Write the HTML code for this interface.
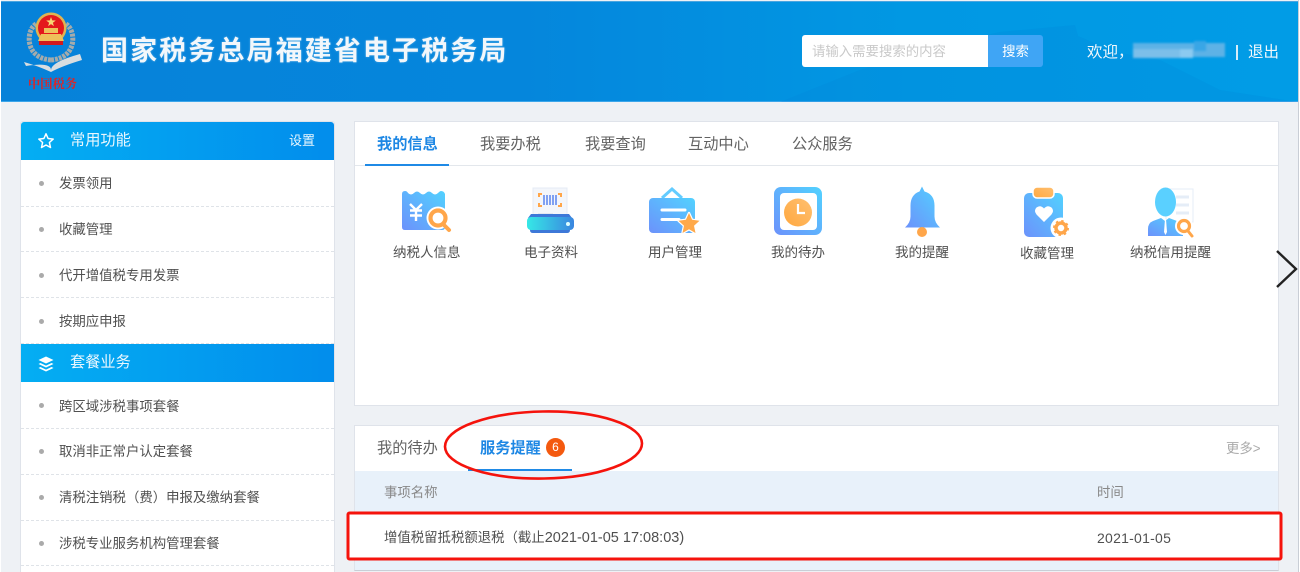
<!DOCTYPE html>
<html lang="zh"><head><meta charset="utf-8"><title>国家税务总局福建省电子税务局</title>
<style>
*{box-sizing:border-box;margin:0;padding:0}
html,body{width:1300px;height:572px;overflow:hidden;background:#eef1f5}
body{position:relative;font-family:"Liberation Sans","Noto Sans CJK SC",sans-serif;color:#555}
.a{position:absolute;white-space:nowrap;line-height:20px}
.box{position:absolute}
.item{font-size:13.4px;left:59px;color:#505050}
.dot{position:absolute;left:39px;width:5px;height:5px;border-radius:50%;background:#aaa}
.dash{position:absolute;left:21px;width:313px;border-top:1px dashed #dfe3e8}
.head{position:absolute;left:21px;width:313px;background:linear-gradient(90deg,#04aef3,#028dec)}
.tab{font-size:15.2px;color:#626262;top:135px}
.lab{font-size:13.5px;color:#505050;top:243px}
</style></head><body>
<div class="box" style="left:1px;top:1px;width:1297px;height:101px;background:linear-gradient(90deg,#0682d9 0%,#0586dc 40%,#0198e3 70%,#019ce6 100%);border-top:1px solid #4aa5e0;border-bottom:1px solid #3ba6ea"></div>
<svg class="box" style="left:0;top:0" width="1300" height="102" viewBox="0 0 1300 102">
<path d="M780 102L860 70 930 48 1000 32 1075 25 1078 36 1115 52 1160 60 1220 90 1298 102Z" fill="#0480d5" opacity=".2"/>
<path d="M26 66Q51 62 51 70Q51 62 80 54L82 60Q62 66 51 72Q38 66 24 62Z" fill="#d9dde0"/>
<path d="M51 60C24 58 26 30 36 24" fill="none" stroke="#a5abab" stroke-width="5" stroke-dasharray="3 1"/>
<path d="M51 60C78 58 76 30 66 24" fill="none" stroke="#a5abab" stroke-width="5" stroke-dasharray="3 1"/>
<circle cx="51" cy="28" r="15.500" fill="#e0b451"/><circle cx="51" cy="28" r="13" fill="#e4181c"/>
<path d="M51 17l1.200 3.400 3.600.1-2.900 2.200 1 3.400-2.900-2-2.900 2 1-3.400-2.900-2.200 3.600-.1Z" fill="#f7d774"/>
<path d="M41 34h20l3 7H38Z" fill="#eec15a"/><rect x="44" y="28" width="14" height="5" fill="#eec15a"/>
<rect x="39" y="41" width="24" height="4" fill="#d21a1d"/>
<text x="28" y="88" font-family="'Noto Serif CJK SC',serif" font-size="12.500" font-weight="700" fill="#dc2528" textLength="49" lengthAdjust="spacingAndGlyphs">中国税务</text>
</svg>
<div class="a" style="left:101px;top:31px;font-size:27px;line-height:40px;font-weight:700;letter-spacing:2.100px;color:#f2f7fb;text-shadow:0 0 2px rgba(255,255,255,.35)">国家税务总局福建省电子税务局</div>
<div class="box" style="left:802px;top:35px;width:187px;height:32px;background:#fff;border-radius:3px 0 0 3px"></div>
<div class="a" style="left:812px;top:42px;font-size:13.400px;color:#c9c9c9">请输入需要搜索的内容</div>
<div class="box" style="left:988px;top:35px;width:55px;height:32px;background:#3fa5f5;border-radius:0 3px 3px 0;color:#fff;font-size:13.400px;line-height:33px;text-align:center">搜索</div>
<div class="a" style="left:1087px;top:43px;font-size:15.500px;color:#f2f8fc">欢迎，</div>
<svg class="box" style="left:1132px;top:38px;filter:blur(1px)" width="96" height="24"><rect x="1" y="5" width="92" height="14" fill="#5db2e6"/><rect x="1" y="11" width="55" height="9" fill="#7cbfe9"/><rect x="48" y="11" width="13" height="9" fill="#8ccaf0"/><rect x="62" y="3" width="12" height="10" fill="#39a6e6"/></svg>
<div class="box" style="left:1236px;top:45px;width:2px;height:15px;background:#d7edf9"></div>
<div class="a" style="left:1248px;top:43px;font-size:15.500px;color:#f2f8fc">退出</div>

<!-- sidebar -->
<div class="box" style="left:20px;top:121px;width:315px;height:451px;background:#fff;border:1px solid #dfe3ea;border-bottom:0;border-radius:3px 3px 0 0"></div>
<div class="head" style="top:122px;height:38px;border-radius:3px 3px 0 0"></div>
<svg class="box" style="left:37px;top:132px" width="18" height="18" viewBox="0 0 18 18"><path d="M9 1.800l2.100 4.700 5.100.6-3.800 3.400 1.100 5L9 13l-4.500 2.500 1.100-5L1.800 7.100l5.100-.6Z" fill="none" stroke="#fff" stroke-width="1.500" stroke-linejoin="round"/></svg>
<div class="a" style="left:70px;top:131px;font-size:15.200px;color:#eaf7fe">常用功能</div>
<div class="a" style="left:289px;top:131px;font-size:13px;color:#eaf7fe">设置</div>
<i class="dot" style="top:181px"></i><div class="a item" style="top:174px">发票领用</div><div class="dash" style="top:206px"></div>
<i class="dot" style="top:227px"></i><div class="a item" style="top:220px">收藏管理</div><div class="dash" style="top:251px"></div>
<i class="dot" style="top:273px"></i><div class="a item" style="top:266px">代开增值税专用发票</div><div class="dash" style="top:297px"></div>
<i class="dot" style="top:319px"></i><div class="a item" style="top:312px">按期应申报</div><div class="dash" style="top:343px"></div>
<div class="head" style="top:344px;height:38px"></div>
<svg class="box" style="left:37px;top:355px" width="18" height="18" viewBox="0 0 18 18"><path d="M9 1.500L16.500 5 9 8.500 1.500 5Z" fill="#fff"/><path d="M3.500 8L9 10.600 14.500 8 16.500 9 9 12.500 1.500 9ZM3.500 12L9 14.600 14.500 12 16.500 13 9 16.500 1.500 13Z" fill="#fff"/></svg>
<div class="a" style="left:70px;top:353px;font-size:15.200px;color:#eaf7fe">套餐业务</div>
<i class="dot" style="top:403px"></i><div class="a item" style="top:397px">跨区域涉税事项套餐</div><div class="dash" style="top:428px"></div>
<i class="dot" style="top:449px"></i><div class="a item" style="top:442px">取消非正常户认定套餐</div><div class="dash" style="top:474px"></div>
<i class="dot" style="top:495px"></i><div class="a item" style="top:488px">清税注销税（费）申报及缴纳套餐</div><div class="dash" style="top:520px"></div>
<i class="dot" style="top:541px"></i><div class="a item" style="top:534px">涉税专业服务机构管理套餐</div><div class="dash" style="top:565px"></div>

<!-- main panel -->
<div class="box" style="left:354px;top:121px;width:925px;height:285px;background:#fff;border:1px solid #dfe3ea"></div>
<div class="box" style="left:355px;top:165px;width:923px;height:1px;background:#e3e7ec"></div>
<div class="box" style="left:365px;top:164px;width:84px;height:2px;background:#1f8ae6"></div>
<div class="a tab" style="left:377px;color:#1d87e4;font-weight:700">我的信息</div>
<div class="a tab" style="left:480px">我要办税</div>
<div class="a tab" style="left:585px">我要查询</div>
<div class="a tab" style="left:688px">互动中心</div>
<div class="a tab" style="left:792px">公众服务</div>

<svg class="box" style="left:0;top:0" width="1300" height="300" viewBox="0 0 1300 300">
<defs>
<linearGradient id="g" x1="0" y1="1" x2="1" y2="0"><stop offset="0" stop-color="#6c92fb"/><stop offset="1" stop-color="#52d2ff"/></linearGradient>
<linearGradient id="o" x1="0" y1="1" x2="1" y2="0"><stop offset="0" stop-color="#ffa83f"/><stop offset="1" stop-color="#ffc071"/></linearGradient>
<linearGradient id="c" x1="0" y1="0" x2="1" y2="0"><stop offset="0" stop-color="#36e8e6"/><stop offset="1" stop-color="#3a86e0"/></linearGradient>
</defs>
<!-- 1 -->
<path d="M402 194q0-3 3-3 2 0 3 2 3 3 6 0 3-3 6 0 3 3 6 0 3-3 6 0 3 3 6 0 2-2 3-2 3 0 4 3v33q0 3-3 3h-37q-3 0-3-3Z" fill="url(#g)"/>
<path d="M410 204l6 6 6-6M416 210v11M410 210.500h12M410 215.500h12" fill="none" stroke="#fff" stroke-width="2.400"/>
<circle cx="438" cy="218" r="11.500" fill="#fff"/><path d="M444 225l5 5" stroke="#ffa64a" stroke-width="4" stroke-linecap="round"/><circle cx="438" cy="218" r="7.500" fill="#fff" stroke="#ffa64a" stroke-width="4.200"/>
<!-- 2 -->
<rect x="533" y="188" width="34" height="32" fill="#f3f6fb" stroke="#e5ebf5"/>
<path d="M542 194h-3v3M558 194h3v3M542 206h-3v-3M558 206h3v-3" fill="none" stroke="#ffa64a" stroke-width="2"/>
<path d="M544 195v10M547 195v10M550 195v10M553 195v10M556 195v10" stroke="#6c92f0" stroke-width="1.700"/>
<rect x="538" y="213" width="15" height="1.500" fill="#e3e8f0"/>
<path d="M531 214h38l3 4H528ZM530 228h40v2q0 3-3 3h-34q-3 0-3-3Z" fill="#3d78d8"/>
<rect x="527" y="217" width="47" height="13" rx="4" fill="url(#c)"/><circle cx="568" cy="224" r="2" fill="#dff"/>
<!-- 3 -->
<path d="M662 198l10-9 10 9" fill="none" stroke="#63ccff" stroke-width="3"/>
<rect x="649" y="198" width="46" height="35" rx="4" fill="url(#g)"/>
<path d="M662 210h23M662 219.500h17" stroke="#fff" stroke-width="3" stroke-linecap="round"/>
<path d="M689 213l3.100 6.800 7.400.9-5.500 5 1.500 7.300-6.500-3.700-6.500 3.700 1.500-7.300-5.500-5 7.400-.9Z" fill="#ffa94a" stroke="#fff" stroke-width="2.400" stroke-linejoin="round" paint-order="stroke"/>
<!-- 4 -->
<rect x="774" y="187" width="48" height="48" rx="7" fill="url(#g)"/><rect x="780" y="193" width="37" height="37" rx="4" fill="#fff"/>
<circle cx="798" cy="212.500" r="14" fill="url(#o)"/><path d="M798 204v9h7" fill="none" stroke="#fff" stroke-width="2.200"/>
<!-- 5 -->
<path d="M922 186.500l2.500 5c7 2 10 7 10 14v11q0 6 5.500 11h-35q5.500-5 5.500-11v-11c0-7 3-12 9-14Z" fill="url(#g)"/>
<circle cx="922" cy="232" r="5" fill="#ffa64a"/>
<!-- 6 -->
<rect x="1024" y="193" width="39" height="44" rx="5" fill="url(#g)"/>
<rect x="1033" y="187" width="21" height="11" rx="4" fill="url(#o)" stroke="#fff" stroke-width="1.500"/>
<path d="M1044 222l-7.500-7.500q-3-4 0-7 4-3 7.500 1 3.500-4 7.500-1 3 3 0 7Z" fill="#fff"/>
<circle cx="1061" cy="228" r="10.500" fill="#fff"/><circle cx="1061" cy="228" r="5" fill="none" stroke="#ffa64a" stroke-width="3.500"/><circle cx="1061" cy="228" r="7" fill="none" stroke="#ffa64a" stroke-width="2" stroke-dasharray="2.400 3.100"/>
<!-- 7 -->
<path d="M1166 189h27v33h-27Z" fill="#fff" stroke="#e6edf7"/><path d="M1176 197h13M1176 205h13M1176 213h13" stroke="#e5edf7" stroke-width="3"/>
<path d="M1148 236v-7q0-6 5-8l8-3 4 3 4-3 8 3q5 2 6 8v7Z" fill="url(#g)"/>
<path d="M1165 219l-1 13 1.500 3 1.500-3-1-13Z" fill="#fff"/>
<ellipse cx="1165.500" cy="202" rx="10.500" ry="14.500" fill="#5ad0ff"/>
<circle cx="1184" cy="226" r="9" fill="#fff"/><circle cx="1184" cy="226" r="5.500" fill="#fff" stroke="#ffa64a" stroke-width="3.200"/><path d="M1188 231l4 5" stroke="#ffa64a" stroke-width="3" stroke-linecap="round"/>
<path d="M1277 251l19 18-19 18" fill="none" stroke="#222" stroke-width="2.400"/>
</svg>
<div class="a lab" style="left:393px">纳税人信息</div>
<div class="a lab" style="left:524px">电子资料</div>
<div class="a lab" style="left:648px">用户管理</div>
<div class="a lab" style="left:771px">我的待办</div>
<div class="a lab" style="left:895px">我的提醒</div>
<div class="a lab" style="left:1020px;top:244px">收藏管理</div>
<div class="a lab" style="left:1130px">纳税信用提醒</div>

<!-- bottom panel -->
<div class="box" style="left:354px;top:425px;width:925px;height:146px;background:#fff;border:1px solid #dfe3ea;border-bottom:1px solid #c9ced6"></div>
<div class="box" style="left:355px;top:471px;width:923px;height:99px;background:#e8f1fa"></div>
<div class="box" style="left:349px;top:513px;width:931px;height:46px;background:#fff"></div>
<div class="a tab" style="left:377px;top:439px">我的待办</div>
<div class="a tab" style="left:480px;top:439px;color:#1d87e4;font-weight:700">服务提醒</div>
<div class="box" style="left:546px;top:438px;width:19px;height:19px;border-radius:50%;background:#f4590f;color:#fff;font-size:12px;line-height:19px;text-align:center">6</div>
<div class="box" style="left:468px;top:469px;width:104px;height:2px;background:#1f8ae6"></div>
<div class="a" style="left:1226px;top:439px;font-size:13.400px;color:#aaa">更多&gt;</div>
<div class="a" style="left:384px;top:483px;font-size:13.400px;color:#888">事项名称</div>
<div class="a" style="left:1097px;top:483px;font-size:13.400px;color:#888">时间</div>
<div class="a" style="left:384px;top:528px;font-size:13.400px;color:#505050">增值税留抵税额退税（截止<span style="font-size:14.500px">2021-01-05 17:08:03)</span></div>
<div class="a" style="left:1097px;top:528px;font-size:14px;letter-spacing:.25px;color:#505050">2021-01-05</div>
<svg class="box" style="left:0;top:0" width="1300" height="572" viewBox="0 0 1300 572">
<ellipse cx="543.500" cy="445" rx="98.500" ry="33.500" transform="rotate(-1 543.500 445)" fill="none" stroke="#f5130c" stroke-width="2.600"/>
<rect x="348" y="513" width="933" height="46" rx="1.500" fill="none" stroke="#f5130c" stroke-width="3"/>
</svg>
<div class="box" style="left:1298px;top:0;width:2px;height:572px;background:#fff;border-left:1px solid #c9ced6"></div>
<div class="box" style="left:0;top:0;width:1px;height:572px;background:#fff"></div>
</body></html>
